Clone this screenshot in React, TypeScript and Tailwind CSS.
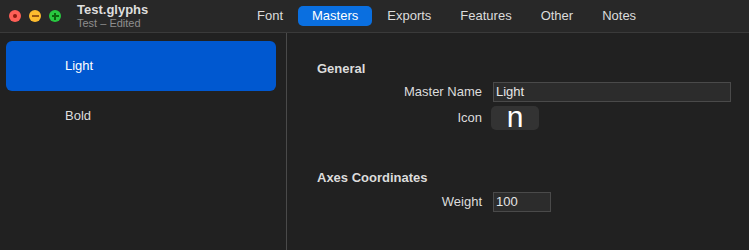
import React from "react";

const tabs = ["Font", "Masters", "Exports", "Features", "Other", "Notes"];

const masters = ["Light", "Bold"];

const TrafficLights = () => (
  <div className="flex items-center gap-[8px] pl-[9px]">
    <span className="flex h-[12px] w-[12px] items-center justify-center rounded-full bg-[#fe5f57]">
      <span className="h-[4px] w-[4px] rounded-full bg-[#8c1a10]" />
    </span>
    <span className="flex h-[12px] w-[12px] items-center justify-center rounded-full bg-[#febc2e]">
      <span className="h-[1.5px] w-[7px] bg-[#985712]" />
    </span>
    <span className="relative flex h-[12px] w-[12px] items-center justify-center rounded-full bg-[#28c840]">
      <span className="absolute h-[1.5px] w-[7px] bg-[#0b650d]" />
      <span className="absolute h-[7px] w-[1.5px] bg-[#0b650d]" />
    </span>
  </div>
);

const Field = ({ label, children }: { label: string; children: React.ReactNode }) => (
  <div className="flex items-center">
    <div className="w-[206px] pr-[11px] text-right text-[13px] text-[#dcdcdc]">{label}</div>
    {children}
  </div>
);

export default function App() {
  return (
    <div
      className="flex h-[250px] w-[749px] flex-col overflow-hidden bg-[#212121] text-white"
      style={{ fontFamily: '"Liberation Sans", Arial, sans-serif' }}
    >
      {/* toolbar */}
      <div className="flex h-[33px] shrink-0 items-center border-b border-[#3a3a3a] bg-[#282828]">
        <TrafficLights />
        <div className="ml-[16px] flex w-[90px] flex-col leading-none">
          <span className="text-[13px] font-bold text-[#dedede]">Test.glyphs</span>
          <span className="mt-[2px] text-[11px] text-[#8e8e8e]">Test – Edited</span>
        </div>
        <div className="ml-[76px] flex items-center gap-[1px]">
          {tabs.map((tab) =>
            tab === "Masters" ? (
              <span
                key={tab}
                className="rounded-[5px] bg-[#0a6fe0] px-[14px] py-[2px] text-[13px] leading-[16px] text-white"
              >
                {tab}
              </span>
            ) : (
              <span key={tab} className="px-[14px] text-[13px] leading-[16px] text-[#dcdcdc]">
                {tab}
              </span>
            )
          )}
        </div>
      </div>

      <div className="flex flex-1">
        {/* sidebar */}
        <div className="flex w-[287px] shrink-0 flex-col border-r border-[#4a4a4a] pl-[6px] pr-[10px] pt-[8px]">
          {masters.map((m, i) => (
            <div
              key={m}
              className={
                i === 0
                  ? "flex h-[50px] items-center rounded-[6px] bg-[#0058d0] pl-[59px] text-[13px] text-white"
                  : "flex h-[50px] items-center pl-[59px] text-[13px] text-[#dedede]"
              }
            >
              {m}
            </div>
          ))}
        </div>

        {/* detail */}
        <div className="flex flex-1 flex-col pl-[30px] pt-[28px]">
          <div className="text-[13px] font-bold leading-[16px] text-[#dcdcdc]">General</div>
          <div className="-ml-[30px] mt-[5px] flex flex-col gap-[4px]">
            <Field label="Master Name">
              <div className="flex h-[20px] w-[238px] items-center border border-[#4a4a4a] bg-[#2c2c2c] pl-[2px] text-[13px] text-[#e6e6e6]">
                Light
              </div>
            </Field>
            <Field label="Icon">
              <div className="-ml-[2px] flex h-[24px] w-[48px] items-center justify-center rounded-[5px] bg-[#333333] pb-[3px] text-[30px] leading-none text-white">
                n
              </div>
            </Field>
          </div>

          <div className="mt-[40px] text-[13px] font-bold leading-[16px] text-[#dcdcdc]">
            Axes Coordinates
          </div>
          <div className="-ml-[30px] mt-[6px]">
            <Field label="Weight">
              <div className="flex h-[20px] w-[58px] items-center border border-[#4a4a4a] bg-[#2c2c2c] pl-[2px] text-[13px] text-[#e6e6e6]">
                100
              </div>
            </Field>
          </div>
        </div>
      </div>
    </div>
  );
}
